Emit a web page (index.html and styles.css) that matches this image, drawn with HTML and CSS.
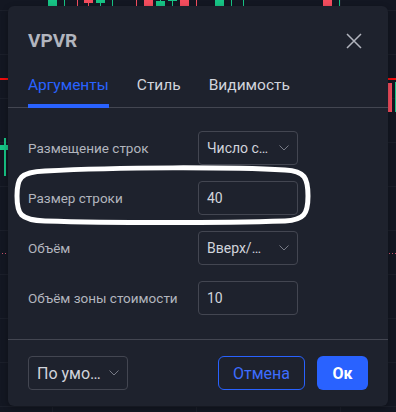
FILE: index.html
```html
<!DOCTYPE html>
<html lang="ru">
<head>
<meta charset="utf-8">
<link rel="stylesheet" href="styles.css">
</head>
<body>
<div class="chart">
  <i class="c g" style="left:48px;top:0;width:9px;height:6px"></i>
  <i class="w g" style="left:64px;top:0;height:6px"></i>
  <i class="w r" style="left:77px;top:0;height:6px"></i>
  <i class="c r" style="left:84px;top:0;width:9px;height:3px"></i>
  <i class="w r" style="left:88px;top:3px;height:3px"></i>
  <i class="c g" style="left:96px;top:0;width:9px;height:3px"></i>
  <i class="w g" style="left:100px;top:3px;height:3px"></i>
  <i class="w g" style="left:112px;top:0;height:6px"></i>
  <i class="w r" style="left:136px;top:0;height:6px"></i>
  <i class="c r" style="left:144px;top:0;width:9px;height:6px"></i>
  <i class="c g" style="left:156px;top:1px;width:9px;height:5px"></i>
  <i class="w g" style="left:160px;top:0;height:1px"></i>
  <i class="c g" style="left:168px;top:0;width:9px;height:1px"></i>
  <i class="w g" style="left:172px;top:0;height:6px"></i>
  <i class="c r" style="left:180px;top:0;width:9px;height:6px"></i>
  <i class="w r" style="left:196px;top:0;height:6px"></i>
  <i class="c g" style="left:215px;top:0;width:9px;height:6px"></i>
  <i class="w g" style="left:231px;top:0;height:6px"></i>
  <i class="w g" style="left:243px;top:0;height:6px"></i>
  <i class="c r" style="left:323px;top:0;width:9px;height:6px"></i>
  <i class="w g" style="left:339px;top:0;height:6px"></i>

  <i class="hl" style="left:0;top:78px;width:8px"></i>
  <i class="hl" style="left:388px;top:78px;width:8px"></i>
  <i class="c r" style="left:388px;top:83px;width:4px;height:29px"></i>
  <i class="w g wide" style="left:395px;top:82px;height:30px"></i>

  <i class="w g wide" style="left:4px;top:138px;height:38px"></i>
  <i class="c g" style="left:0;top:145px;width:8px;height:5px"></i>

  <i class="dot" style="left:2px;top:253px"></i>
  <i class="dot" style="left:5px;top:253px"></i>
  <i class="dot" style="left:389px;top:253px"></i>
  <i class="dot" style="left:392px;top:253px"></i>
  <i class="dot" style="left:395px;top:253px"></i>
</div>

<div class="dialog">
  <div class="header">
    <span class="title">VPVR</span>
    <span class="close">
      <svg width="16" height="16" viewBox="0 0 16 16"><path d="M1 1L15 15M15 1L1 15" stroke="#b2b5be" stroke-width="1.5" fill="none"/></svg>
    </span>
  </div>
  <div class="tabs">
    <div class="tab active">Аргументы</div>
    <div class="tab">Стиль</div>
    <div class="tab">Видимость</div>
  </div>
  <div class="content">
    <div class="row">
      <span class="label">Размещение строк</span>
      <div class="field select"><span class="val">Число с…</span><svg class="chev" width="10" height="6" viewBox="0 0 10 6"><path d="M0.5 0.5L5 5L9.5 0.5" stroke="#787b86" stroke-width="1" fill="none"/></svg></div>
    </div>
    <div class="row">
      <span class="label">Размер строки</span>
      <div class="field"><span class="val">40</span></div>
    </div>
    <div class="row">
      <span class="label">Объём</span>
      <div class="field select"><span class="val">Вверх/…</span><svg class="chev" width="10" height="6" viewBox="0 0 10 6"><path d="M0.5 0.5L5 5L9.5 0.5" stroke="#787b86" stroke-width="1" fill="none"/></svg></div>
    </div>
    <div class="row">
      <span class="label">Объём зоны стоимости</span>
      <div class="field"><span class="val">10</span></div>
    </div>
  </div>
  <div class="footer">
    <div class="field select defaults"><span class="val">По умо…</span><svg class="chev" width="10" height="6" viewBox="0 0 10 6"><path d="M0.5 0.5L5 5L9.5 0.5" stroke="#787b86" stroke-width="1" fill="none"/></svg></div>
    <div class="spacer"></div>
    <div class="btn cancel">Отмена</div>
    <div class="btn ok">Ок</div>
  </div>
</div>

<svg class="annotation" width="396" height="412" viewBox="0 0 396 412">
  <path d="M45 171 C120 167 230 167 285 170 C305 171 308 178 308 196 C308 214 304 220 285 221 C220 223 110 223 45 221 C20 220 17 214 17 196 C17 178 20 172 45 171 Z" fill="none" stroke="#ffffff" stroke-width="5"/>
</svg>
</body>
</html>
```

FILE: styles.css
```css
html, body {
  margin: 0;
  padding: 0;
}
body {
  width: 396px;
  height: 412px;
  overflow: hidden;
  position: relative;
  background-color: #131722;
  background-image:
    linear-gradient(#1b1f2a 1px, transparent 1px),
    linear-gradient(90deg, #1b1f2a 1px, transparent 1px);
  background-size: 396px 44px, 144px 412px;
  background-position: 0 10px, 52px 0;
  font-family: Roboto, "Noto Sans", sans-serif;
  padding-top: 6px;
  padding-left: 8px;
  box-sizing: border-box;
}
.chart {
  position: absolute;
  inset: 0;
}
.chart i {
  position: absolute;
  display: block;
}
.chart .c.g { background: #17c485; }
.chart .c.r { background: #f44d5e; }
.chart .w { width: 1px; }
.chart .w.wide { width: 2px; }
.chart .w.g { background: #17c485; }
.chart .w.r { background: #f44d5e; }
.chart .hl { height: 2px; background: #f00d0d; }
.chart .dot { width: 1px; height: 1px; background: #c8506b; }

.dialog {
  position: relative;
  width: 380px;
  height: 400px;
  background: #1e222d;
  border-radius: 6px;
  display: flex;
  flex-direction: column;
  box-shadow: 0 2px 6px rgba(0,0,0,0.3);
}
.header {
  display: flex;
  align-items: center;
  justify-content: space-between;
  padding: 24px 20px 0 20px;
  height: 22px;
}
.title {
  font-size: 19px;
  font-weight: 700;
  color: #b2b5be;
  line-height: 22px;
}
.close {
  width: 28px;
  height: 28px;
  display: flex;
  align-items: center;
  justify-content: center;
}
.tabs {
  display: flex;
  gap: 28px;
  margin-top: 23px;
  padding: 0 20px;
  border-bottom: 1px solid #434651;
}
.tab {
  position: relative;
  font-size: 15.5px;
  line-height: 20px;
  padding-bottom: 12px;
  color: #d1d4dc;
  font-weight: 400;
}
.tab.active {
  color: #2962ff;
}
.tab.active::after {
  content: "";
  position: absolute;
  left: 0;
  right: 0;
  bottom: -1px;
  height: 4px;
  background: #2962ff;
}
.content {
  display: flex;
  flex-direction: column;
  gap: 16px;
  padding: 23px 20px 24px 20px;
  border-bottom: 1px solid #434651;
}
.row {
  display: flex;
  align-items: center;
}
.label {
  width: 170px;
  font-size: 13.5px;
  color: #b2b5be;
}
.field {
  box-sizing: border-box;
  width: 100px;
  height: 34px;
  border: 1px solid #434651;
  border-radius: 4px;
  display: flex;
  align-items: center;
  padding: 0 8px;
}
.val {
  font-size: 14px;
  color: #d1d4dc;
  flex: 1;
  white-space: nowrap;
}
.chev {
  flex: none;
}
.footer {
  display: flex;
  align-items: center;
  padding: 16px 20px;
  gap: 12px;
}
.defaults .val {
  font-size: 16px;
}
.spacer {
  flex: 1;
}
.btn {
  box-sizing: border-box;
  height: 34px;
  border-radius: 6px;
  display: flex;
  align-items: center;
  justify-content: center;
  font-size: 16px;
}
.cancel {
  width: 87px;
  border: 1px solid #2962ff;
  color: #3d6dff;
}
.ok {
  width: 51px;
  background: #2962ff;
  color: #ffffff;
  font-weight: 700;
}
.annotation {
  position: absolute;
  left: 0;
  top: 0;
  pointer-events: none;
}
```
